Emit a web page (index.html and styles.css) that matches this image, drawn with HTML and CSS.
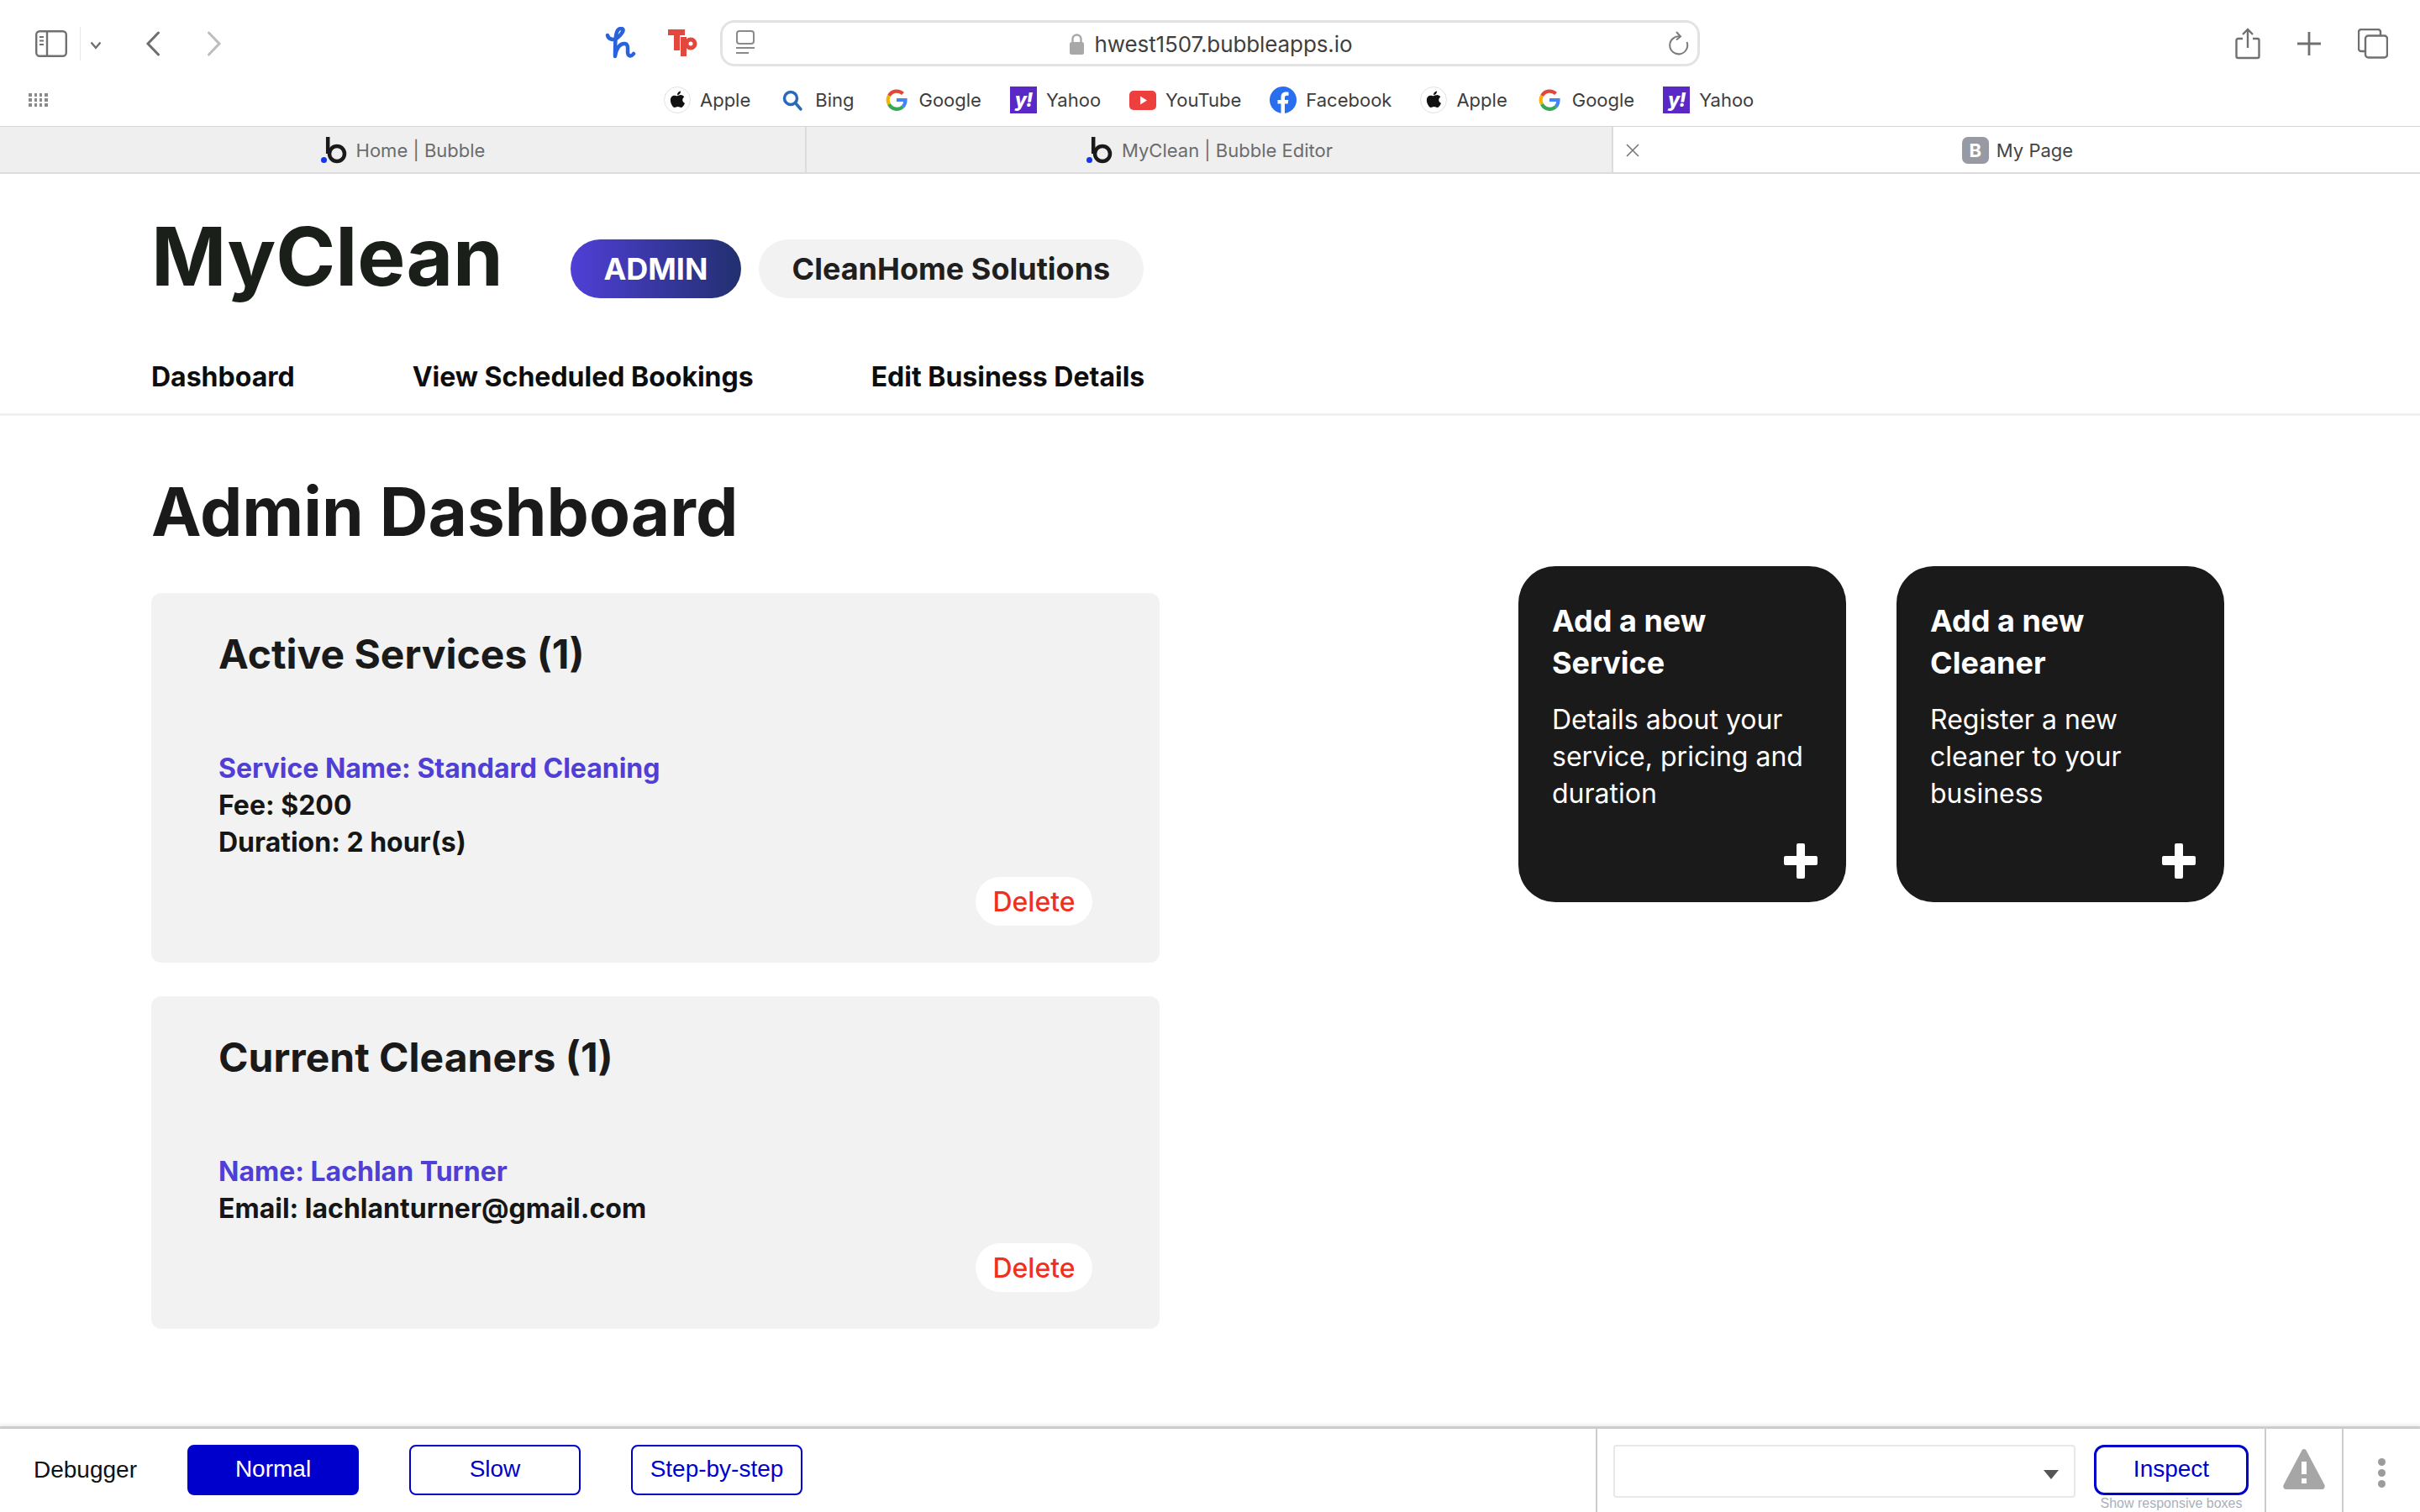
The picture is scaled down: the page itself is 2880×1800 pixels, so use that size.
FILE: index.html
```html
<!DOCTYPE html>
<html lang="en">
<head>
<meta charset="utf-8">
<title>MyClean</title>
<link rel="stylesheet" href="styles.css">
</head>
<body>
<div class="app">
  <div class="chrome">
    <div class="toolbar">
      <div class="tb-left">
        <svg class="ic-sidebar" width="38" height="32" viewBox="0 0 38 32" fill="none" stroke="#707070" stroke-width="2.4"><rect x="1.2" y="1.2" width="35.6" height="29.6" rx="4"/><path d="M14 1v30"/><path d="M5 8h5M5 12.500h5M5 17h5" stroke-width="2"/></svg>
        <span class="tb-divider"></span>
        <svg class="ic-down" width="14" height="10" viewBox="0 0 14 10" fill="none" stroke="#707070" stroke-width="2.400"><path d="M1.500 1.500 7 8l5.500-6.500"/></svg>
        <svg class="ic-back" width="18" height="30" viewBox="0 0 18 30" fill="none" stroke="#6e6e6e" stroke-width="3" stroke-linecap="round"><path d="M15.500 2 3 15l12.500 13"/></svg>
        <svg class="ic-fwd" width="18" height="30" viewBox="0 0 18 30" fill="none" stroke="#bdbdbd" stroke-width="3" stroke-linecap="round"><path d="M2.500 2 15 15 2.500 28"/></svg>
        <svg class="ic-h" width="38" height="40" viewBox="0 0 38 40" fill="none" stroke="#2a62dc" stroke-width="4.500" stroke-linecap="round" stroke-linejoin="round"><path d="M3 10C4 15 11 17 16 12 21 7 24 2 19 2 13 2 12 10 12 35 13 27 17 20 23 20 28 20 27 26 27 30 27 35 31 36 34 32"/></svg>
        <svg class="ic-tp" width="36" height="34" viewBox="0 0 36 34"><path d="M0 0h20v7h-6v18H7V7H0z" fill="#e2483d"/><path d="M15 9h7v23h-7z" fill="#e2483d"/><circle cx="27" cy="17" r="5" fill="none" stroke="#e2483d" stroke-width="5"/></svg>
      </div>
      <div class="urlbar">
        <svg class="ic-reader" width="24" height="32" viewBox="0 0 24 32" fill="none" stroke="#8a8a8a" stroke-width="2"><rect x="2" y="1" width="20" height="15" rx="3"/><path d="M1 21h22M1 27h15"/></svg>
        <span class="url-center">
          <svg width="19" height="25" viewBox="0 0 19 25"><path d="M4.500 11V6.500a5 5 0 0 1 10 0V11" fill="none" stroke="#a8a8a8" stroke-width="2.400"/><rect x="1" y="10" width="17" height="15" rx="2.500" fill="#a8a8a8"/></svg>
          <span class="url-text">hwest1507.bubbleapps.io</span>
        </span>
        <svg class="ic-reload" width="26" height="30" viewBox="0 0 26 30" fill="none" stroke="#7c7c7c" stroke-width="2"><path d="M15.500 6.500A10.500 10.500 0 1 0 23.500 13"/><path d="M11 1l5 5.500-5 4"/></svg>
      </div>
      <div class="tb-right">
        <svg width="30" height="38" viewBox="0 0 30 38" fill="none" stroke="#707070" stroke-width="2.400"><path d="M9 13H3.500a2 2 0 0 0-2 2v19a2 2 0 0 0 2 2h23a2 2 0 0 0 2-2V15a2 2 0 0 0-2-2H21"/><path d="M15 24V2M9 8l6-6 6 6"/></svg>
        <svg width="28" height="28" viewBox="0 0 28 28" fill="none" stroke="#707070" stroke-width="2.800"><path d="M14 0v28M0 14h28"/></svg>
        <svg width="36" height="36" viewBox="0 0 36 36" fill="none" stroke="#707070" stroke-width="2.400"><path d="M8 27H4a3 3 0 0 1-3-3V4a3 3 0 0 1 3-3h20a3 3 0 0 1 3 3v4"/><rect x="9" y="8.500" width="26" height="26" rx="3.500" fill="#fff"/></svg>
      </div>
    </div>
    <div class="bookmarks-row">
      <svg class="ic-grid" width="24" height="16" viewBox="0 0 24 16" fill="#8a8a8a"><path d="M0 0h4v4H0zM7 0h3v4H7zM13 0h3v4h-3zM19 0h4v4h-4zM0 6h4v4H0zM7 6h3v4H7zM13 6h3v4h-3zM19 6h4v4h-4zM0 12h4v4H0zM7 12h3v4H7zM13 12h3v4h-3zM19 12h4v4h-4z"/></svg>
      <div class="bookmarks">
        <a class="bm"><svg class="fav" viewBox="0 0 32 32"><circle cx="16" cy="16" r="15.500" fill="#fff" stroke="#e2e2e2"/><path d="M16 11c1.500 0 3-1.200 5-.8 1.600.3 2.700 1.100 3.300 2.200-3 1.800-2.500 6 .7 7.300-.8 2.400-2.800 5.300-4.500 5.300-1.500 0-2-.9-3.800-.9s-2.400.9-3.800.9c-2.200 0-5-5-5-8.800 0-3.700 2.400-5.400 4.700-5.400 1.500 0 2.700.7 3.400.7z" fill="#111"/><path d="M16 10c0-2.500 1.700-4.200 4-4.500.2 2.500-1.800 4.500-4 4.500z" fill="#111"/></svg><span>Apple</span></a>
        <a class="bm"><svg class="fav" viewBox="0 0 32 32" fill="none" stroke="#2a6ab8" stroke-width="3.500"><circle cx="14" cy="14" r="7.500"/><path d="M19.500 19.500 26 27" stroke-linecap="round"/></svg><span>Bing</span></a>
        <a class="bm"><svg class="fav" viewBox="0 0 32 32" fill="none" stroke-width="4.200"><path d="M23.500 8.500A10.500 10.500 0 0 0 7 11" stroke="#e0493a"/><path d="M7 11a10.500 10.500 0 0 0 0 10" stroke="#f4b400"/><path d="M7 21a10.500 10.500 0 0 0 16.500 3" stroke="#35a853"/><path d="M23.500 24c2-2 3-5 3-8H16" stroke="#4285f4"/></svg><span>Google</span></a>
        <a class="bm"><span class="fav fav-yahoo">y!</span><span>Yahoo</span></a>
        <a class="bm"><svg class="fav" viewBox="0 0 32 32"><rect x="0" y="5" width="32" height="23" rx="5" fill="#ee3f3f"/><path d="M13 11.500 21 16.500 13 21.500z" fill="#fff"/></svg><span>YouTube</span></a>
        <a class="bm"><svg class="fav" viewBox="0 0 32 32"><circle cx="16" cy="16" r="16" fill="#2a6ef0"/><path d="M13.500 32V20.500H9.500V16h4v-3.500c0-4 2.400-6 6-6 1.600 0 3 .2 3 .2v4h-2c-2 0-2.500 1-2.500 2.400V16h4.300l-.7 4.500h-3.600V32z" fill="#fff"/></svg><span>Facebook</span></a>
        <a class="bm"><svg class="fav" viewBox="0 0 32 32"><circle cx="16" cy="16" r="15.500" fill="#fff" stroke="#e2e2e2"/><path d="M16 11c1.500 0 3-1.200 5-.8 1.600.3 2.700 1.100 3.300 2.200-3 1.800-2.500 6 .7 7.300-.8 2.400-2.800 5.300-4.500 5.300-1.500 0-2-.9-3.800-.9s-2.400.9-3.800.9c-2.200 0-5-5-5-8.800 0-3.700 2.400-5.400 4.700-5.400 1.500 0 2.700.7 3.400.7z" fill="#111"/><path d="M16 10c0-2.500 1.700-4.200 4-4.500.2 2.500-1.800 4.500-4 4.500z" fill="#111"/></svg><span>Apple</span></a>
        <a class="bm"><svg class="fav" viewBox="0 0 32 32" fill="none" stroke-width="4.200"><path d="M23.500 8.500A10.500 10.500 0 0 0 7 11" stroke="#e0493a"/><path d="M7 11a10.500 10.500 0 0 0 0 10" stroke="#f4b400"/><path d="M7 21a10.500 10.500 0 0 0 16.500 3" stroke="#35a853"/><path d="M23.500 24c2-2 3-5 3-8H16" stroke="#4285f4"/></svg><span>Google</span></a>
        <a class="bm"><span class="fav fav-yahoo">y!</span><span>Yahoo</span></a>
      </div>
    </div>
    <div class="tabs">
      <div class="tab">
        <svg class="tab-b" viewBox="0 0 34 32"><circle cx="4.500" cy="27.500" r="3.500" fill="#1336f0"/><circle cx="20" cy="20" r="9" fill="none" stroke="#1a1a1a" stroke-width="4.500"/><path d="M9.200 0v20" stroke="#1a1a1a" stroke-width="4.500" fill="none"/></svg>
        <span>Home | Bubble</span>
      </div>
      <div class="tab">
        <svg class="tab-b" viewBox="0 0 34 32"><circle cx="4.500" cy="27.500" r="3.500" fill="#1336f0"/><circle cx="20" cy="20" r="9" fill="none" stroke="#1a1a1a" stroke-width="4.500"/><path d="M9.200 0v20" stroke="#1a1a1a" stroke-width="4.500" fill="none"/></svg>
        <span>MyClean | Bubble Editor</span>
      </div>
      <div class="tab tab-active">
        <svg class="tab-close" width="16" height="16" viewBox="0 0 16 16" fill="none" stroke="#777" stroke-width="1.600"><path d="M1 1l14 14M15 1 1 15"/></svg>
        <span class="fav-b">B</span>
        <span>My Page</span>
      </div>
    </div>
  </div>

  <div class="page">
    <header class="site-header">
      <div class="brand-row">
        <h1 class="brand">MyClean</h1>
        <span class="pill pill-admin">ADMIN</span>
        <span class="pill pill-biz">CleanHome Solutions</span>
      </div>
      <nav class="nav">
        <a>Dashboard</a>
        <a>View Scheduled Bookings</a>
        <a>Edit Business Details</a>
      </nav>
    </header>
    <main class="main">
      <div class="col-left">
        <h2 class="page-title">Admin Dashboard</h2>
        <section class="panel">
          <h3 class="panel-title">Active Services (1)</h3>
          <p class="line line-accent">Service Name: Standard Cleaning</p>
          <p class="line">Fee: $200</p>
          <p class="line">Duration: 2 hour(s)</p>
          <button class="delete">Delete</button>
        </section>
        <section class="panel">
          <h3 class="panel-title">Current Cleaners (1)</h3>
          <p class="line line-accent">Name: Lachlan Turner</p>
          <p class="line">Email: lachlanturner@gmail.com</p>
          <button class="delete">Delete</button>
        </section>
      </div>
      <div class="col-right">
        <article class="card">
          <h4 class="card-title">Add a new Service</h4>
          <p class="card-text">Details about your service, pricing and duration</p>
          <svg class="card-plus" width="40" height="42" viewBox="0 0 40 42" fill="#fff"><path d="M15 2a2 2 0 0 1 2-2h6a2 2 0 0 1 2 2v13h13a2 2 0 0 1 2 2v7a2 2 0 0 1-2 2H25v14a2 2 0 0 1-2 2h-6a2 2 0 0 1-2-2V26H2a2 2 0 0 1-2-2v-7a2 2 0 0 1 2-2h13z"/></svg>
        </article>
        <article class="card">
          <h4 class="card-title">Add a new Cleaner</h4>
          <p class="card-text">Register a new cleaner to your business</p>
          <svg class="card-plus" width="40" height="42" viewBox="0 0 40 42" fill="#fff"><path d="M15 2a2 2 0 0 1 2-2h6a2 2 0 0 1 2 2v13h13a2 2 0 0 1 2 2v7a2 2 0 0 1-2 2H25v14a2 2 0 0 1-2 2h-6a2 2 0 0 1-2-2V26H2a2 2 0 0 1-2-2v-7a2 2 0 0 1 2-2h13z"/></svg>
        </article>
      </div>
    </main>
  </div>

  <footer class="debugger">
    <div class="dbg-left">
      <span class="dbg-label">Debugger</span>
      <button class="dbg-btn dbg-btn-on">Normal</button>
      <button class="dbg-btn">Slow</button>
      <button class="dbg-btn">Step-by-step</button>
    </div>
    <div class="dbg-inspect">
      <div class="dbg-select"><span class="dbg-caret"></span></div>
      <div class="dbg-inspect-col">
        <button class="dbg-btn dbg-btn-inspect">Inspect</button>
        <span class="dbg-hint">Show responsive boxes</span>
      </div>
    </div>
    <div class="dbg-warn">
      <svg width="50" height="48" viewBox="0 0 50 48"><path d="M25 0c1.500 0 2.500 1 3 2.500L49.500 43c.8 2.500-.5 5-3 5h-43c-2.500 0-3.800-2.500-3-5L22 2.500C22.500 1 23.500 0 25 0z" fill="#a6a6a6"/><path d="M22 15h6v15h-6zM22 35h6v6h-6z" fill="#fff"/></svg>
    </div>
    <div class="dbg-more"><i></i><i></i><i></i></div>
  </footer>
</div>
</body>
</html>
```
FILE: styles.css
```css
* { box-sizing: border-box; }
html, body { margin: 0; padding: 0; }
body { font-family: Inter, "Liberation Sans", sans-serif; color: #1a1a1a; background: #fff; }
.app { width: 2880px; height: 1800px; display: flex; flex-direction: column; overflow: hidden; }

/* Browser chrome */
.chrome { flex: none; background: #fff; }
.toolbar { height: 93px; padding-top: 10px; display: flex; align-items: center; }
.tb-left { width: 857px; padding-left: 42px; display: flex; align-items: center; }
.tb-divider { width: 1px; height: 40px; background: #e6e6e6; margin-left: 15px; }
.ic-down { margin-left: 11px; margin-top: 4px; }
.ic-back { margin-left: 52px; }
.ic-fwd { margin-left: 55px; }
.ic-h { margin-left: 456px; }
.ic-tp { margin-left: 37px; }
.urlbar { width: 1166px; height: 55px; border: 3px solid #e3e3e3; border-radius: 17px; display: flex; align-items: center; padding: 0 10px 0 15px; position: relative; }
.url-center { flex: 1; display: flex; align-items: center; justify-content: center; gap: 12px; padding: 2px 0 0 0; }
.url-text { font-size: 26px; color: #3f3f3f; letter-spacing: -0.1px; }
.ic-reload { flex: none; margin-left: 2px; }
.tb-right { flex: 1; display: flex; align-items: center; padding-left: 637px; gap: 44px; }

.bookmarks-row { height: 50px; margin-bottom: 7px; display: flex; align-items: center; padding-left: 34px; }
.ic-grid { margin-top: 2px; }
.bookmarks { margin-left: 732px; display: flex; align-items: center; gap: 34px; padding-top: 1px; }
.bm { display: flex; align-items: center; gap: 11px; font-size: 22px; color: #3d3d3d; }
.fav { width: 32px; height: 32px; flex: none; }
.fav-yahoo { background: #5a28c6; color: #fff; font: italic 800 23px/32px Inter, sans-serif; text-align: center; letter-spacing: -1px; }

.tabs { height: 57px; display: grid; grid-template-columns: repeat(3, 1fr); border-bottom: 2px solid #dcdcdc; box-shadow: inset 0 2px 2px #d4d4d4; padding-top: 1px; }
.tab { display: flex; align-items: center; justify-content: center; gap: 9px; padding-top: 1px; background: #efefef; border-right: 2px solid #dcdcdc; font-size: 22px; color: #6c6c6c; position: relative; }
.tab-b { width: 34px; height: 32px; }
.tab-active { background: #fff; border-right: 0; color: #444; padding-left: 2px; }
.tab-close { position: absolute; left: 15px; top: 20px; }
.fav-b { width: 32px; height: 32px; border-radius: 7px; background: #9799a3; color: #fff; font: 700 22px/32px Inter, sans-serif; text-align: center; }

/* App page */
.page { flex: 1; min-height: 0; }
.site-header { border-bottom: 3px solid #f1f1f1; height: 288px; padding: 40px 0 0 180px; }
.brand-row { display: flex; align-items: flex-start; }
.brand { margin: 0 80px 0 0; font-size: 96px; line-height: 116px; font-weight: 700; color: #1a1f1a; }
.pill { height: 70px; margin-top: 38px; border-radius: 36px; display: flex; align-items: center; justify-content: center; font-size: 36px; font-weight: 700; }
.pill-admin { width: 203px; color: #fff; background: linear-gradient(90deg, #4f3fd6, #21306f); }
.pill-biz { width: 458px; margin-left: 21px; background: #f2f2f2; color: #1f1f1f; }
.nav { margin-top: 58px; display: flex; gap: 140px; font-size: 32px; font-weight: 700; line-height: 56px; color: #0d0d0d; }

.main { display: flex; padding: 65px 0 0 180px; }
.col-left { width: 1200px; }
.page-title { margin: 0 0 48px; font-size: 80px; line-height: 98px; font-weight: 700; color: #1a1a1a; }
.panel { background: #f2f2f2; border-radius: 12px; padding: 43px 80px 44px; display: flex; flex-direction: column; margin-bottom: 40px; }
.panel-title { margin: 0 0 84px; font-size: 48px; line-height: 60px; font-weight: 700; color: #1a1a1a; }
.line { margin: 0; font-size: 32px; line-height: 44px; font-weight: 700; color: #161616; }
.line-accent { color: #4f3fd6; }
.delete { align-self: flex-end; margin-top: 19px; width: 139px; height: 58px; border: 0; border-radius: 29px; background: #fff; color: #f0301f; font: 500 32px Inter, sans-serif; padding: 0; }

.col-right { margin: 114px 0 0 427px; display: flex; gap: 60px; align-items: flex-start; }
.card { width: 390px; height: 400px; background: #1a1a1a; color: #fff; border-radius: 44px; padding: 40px 34px 28px 40px; display: flex; flex-direction: column; }
.card-title { margin: 0 0 21px; font-size: 36px; line-height: 50px; font-weight: 700; }
.card-text { margin: 0; font-size: 32px; line-height: 44px; font-weight: 400; }
.card-plus { margin-top: auto; align-self: flex-end; }

/* Debugger */
.debugger { flex: none; height: 102px; border-top: 3px solid #cccccc; display: flex; font-family: "Liberation Sans", Arial, sans-serif; box-shadow: 0 -3px 3px #f0f0f0; background: #fff; }
.dbg-left { width: 1899px; display: flex; padding: 19px 0 0 40px; align-items: flex-start; }
.dbg-label { font-size: 28px; line-height: 60px; width: 183px; color: #111; }
.dbg-btn { width: 204px; height: 60px; margin-right: 60px; background: #fff; border: 2px solid #0000cd; border-radius: 8px; color: #0000cd; font: 28px "Liberation Sans", Arial, sans-serif; padding: 0 0 3px; }
.dbg-btn-on { background: #0000cd; color: #fff; }
.dbg-inspect { width: 798px; border-left: 2px solid #cccccc; border-right: 2px solid #cccccc; display: flex; padding: 19px 0 0 19px; align-items: flex-start; gap: 22px; }
.dbg-select { width: 550px; height: 63px; border: 2px solid #e8e8e8; border-radius: 4px; position: relative; }
.dbg-caret { position: absolute; right: 18px; top: 28px; border-left: 9px solid transparent; border-right: 9px solid transparent; border-top: 11px solid #555; }
.dbg-inspect-col { display: flex; flex-direction: column; align-items: center; width: 184px; }
.dbg-btn-inspect { width: 184px; margin: 0; border-width: 3px; border-radius: 12px; }
.dbg-hint { font-size: 16px; line-height: 18px; color: #a9afb8; white-space: nowrap; margin-top: 1px; }
.dbg-warn { width: 92px; border-right: 2px solid #cccccc; display: flex; justify-content: center; padding-top: 24px; }
.dbg-more { flex: 1; display: flex; flex-direction: column; align-items: center; padding: 35px 0 0 0; gap: 4px; }
.dbg-more i { width: 9px; height: 9px; border-radius: 50%; background: #9c9c9c; }
```
